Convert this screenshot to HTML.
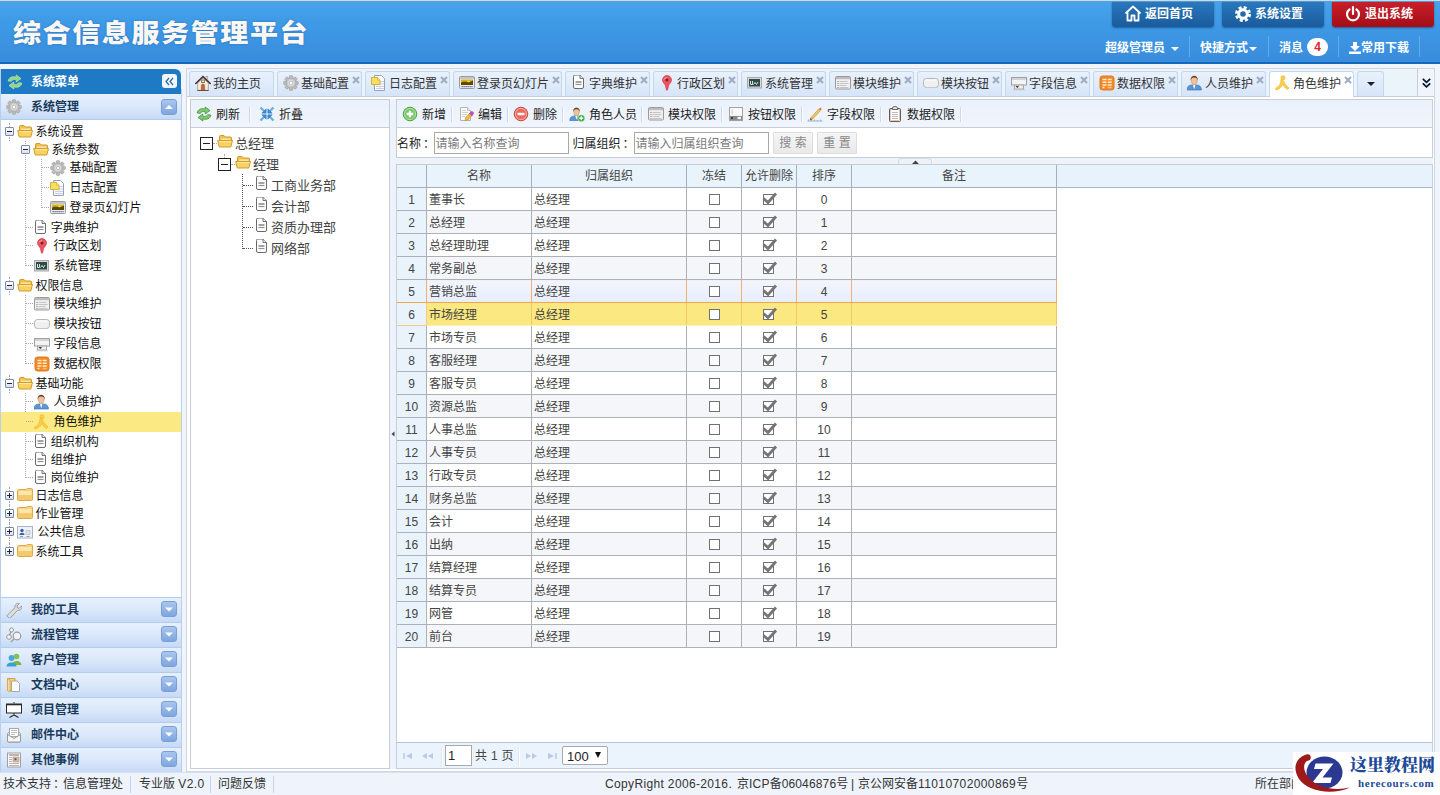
<!DOCTYPE html>
<html lang="zh-CN"><head><meta charset="utf-8"><title>综合信息服务管理平台</title><style>
*{box-sizing:border-box;margin:0;padding:0}
html,body{width:1440px;height:795px;overflow:hidden}
body{position:relative;background:#f0f4fb;font:12px/1 "Liberation Sans","Noto Sans CJK SC",sans-serif;color:#222}
.abs{position:absolute}
svg.ic{display:block}
#top{left:0;top:0;width:1440px;height:64px;background:linear-gradient(180deg,#47a3ea 0%,#3d98e5 45%,#3a8cdc 100%);border-top:1px solid #d8d8d8;border-bottom:2px solid #0f6ac0;overflow:hidden}
#title{left:13px;top:16px;font-size:25.5px;font-weight:900;color:#fbf8f4;letter-spacing:1.42px;line-height:32px;white-space:nowrap;text-shadow:0 0 2px rgba(30,90,170,.7);transform:scale(1.1,1);transform-origin:0 0}
.hbtn{top:1px;height:25px;width:102px;border-radius:0 0 3px 3px;background:linear-gradient(180deg,#2a78bd,#1a5b9d);color:#fff;font-size:12px;font-weight:bold;line-height:24px;white-space:nowrap;box-shadow:0 1px 2px rgba(0,40,90,.5)}
.hbtn.red{background:linear-gradient(180deg,#c8202a,#a50d17)}
.hbtn span{position:absolute;left:33px;top:0}
.hbtn svg{position:absolute;left:12px;top:3px}
.hlink{top:39px;height:16px;line-height:16px;color:#fff;font-size:12px;white-space:nowrap;font-weight:bold}
.hsep{top:35px;width:1px;height:21px;background:#62acea}
.caret{display:inline-block;width:0;height:0;border:4px solid transparent;border-top-color:#fff;border-bottom:0;vertical-align:middle;margin-left:3px}
#west{left:0;top:69px;width:182px;height:703px}
#wbg{left:0;top:20px;width:182px;height:683px;background:#fff;box-shadow:inset 1px 0 0 #b8cfee, inset -1px 0 0 #b8cfee}
#whead{left:0;top:0;width:181px;height:25px;background:#1e7ac4;border-radius:0 5px 0 0;color:#fff;font-weight:bold;line-height:25px}
.acc{left:1px;width:180px;height:25px;background:linear-gradient(180deg,#e6f0fd 0%,#dbe8fa 50%,#c6daf6 100%);border-top:1px solid #b3cbee;color:#1a3a5c;font-weight:bold}
.acc.first{height:26px;border-top:0;border-bottom:1px solid #b3cbee}
.acc.first .t{top:6px}.acc.first svg.ic{top:5px}.acc.first .tool{top:5px}
.acc .t{position:absolute;left:30px;top:5px;line-height:14px;white-space:nowrap}
.acc svg.ic{position:absolute;left:5px;top:4px}
.acc .tool{position:absolute;left:160px;top:3px;width:16px;height:16px;border-radius:3px;background:linear-gradient(180deg,#a9c6ee,#7ea6df);border:1px solid #7a9fd6}
.tn{height:16px;line-height:16px;white-space:nowrap;color:#111}
.tn svg.ic{position:absolute;left:0;top:0}
.tn .lbl{position:absolute;top:0;left:19px}
.sw{width:9px;height:9px;border:1px solid #7a8aa8;background:linear-gradient(180deg,#fff,#d8e0ee);border-radius:1px}
.sw:before{content:"";position:absolute;left:1px;top:3px;width:5px;height:1px;background:#223}
.sw.plus:after{content:"";position:absolute;left:3px;top:1px;width:1px;height:5px;background:#223}
.dotv{width:0;border-left:1px dotted #a8a8a8}
.doth{height:0;border-top:1px dotted #a8a8a8}
.tab{top:71px;height:25px;border:1px solid #c3d7f0;border-bottom:0;border-radius:3px 3px 0 0;background:linear-gradient(180deg,#e9f1fc 0%,#e0ebfa 50%,#d6e5f9 100%);white-space:nowrap;color:#333}
.tab.sel{background:#fff;height:26px}
.tab svg.ic{position:absolute;left:5px;top:3px}
.tab .tt{position:absolute;left:23px;top:5px;line-height:14px}
.tab .x{position:absolute;right:1px;top:4px;width:8px;height:8px}
.panel{background:#fff;border:1px solid #c4d8f2}
.tbar{background:linear-gradient(180deg,#e9f1fb,#f1f5fc);border-bottom:1px solid #c6ccd8}
.tb{top:6px;height:16px;line-height:16px;white-space:nowrap;color:#222}
.tb svg.ic{position:absolute;left:0;top:0}
.tb span{position:absolute;left:20px;top:1px}
.tsep{top:7px;width:1px;height:15px;background:#d2d9e4;border-right:1px solid #fbfcfe;box-sizing:content-box}
.inp{height:22px;border:1px solid #a9a9a9;background:#fff;color:#7a7a7a;line-height:22px;padding-left:0;text-indent:0.5px;white-space:nowrap;overflow:hidden}
.btn{height:22px;border:1px solid #dcdcdc;background:linear-gradient(180deg,#f6f6f6,#e9e9e9);color:#888;text-align:center;line-height:21px;border-radius:1px}
table.grid{border-collapse:collapse;table-layout:fixed;position:absolute;left:0;top:0}
table.grid td,table.grid th{border:1px solid #adb0b6;height:23px;padding:0;font-weight:normal;color:#444;white-space:nowrap;overflow:hidden;line-height:14px;vertical-align:middle}
table.grid th{background:#e9f3fc;text-align:center;border-color:#a4b0c0}
table.grid td{padding-top:2px}
table.grid td.n{background:#e9f3fc;text-align:center}
table.grid td.l{text-align:left;padding-left:2px}
table.grid td.c{text-align:center}
table.grid tr.alt td{background:#f4f6f9}
table.grid tr.alt td.n{background:#e9f3fc}
table.grid tr.sel td{background:#fbe880;border-bottom-color:#fdf0b8;border-right-color:#f3c766}
table.grid tr.sel td.n{background:#e9f3fc;border-bottom-color:#f5c890;border-right-color:#f5c890}
table.grid tr.hov td{background:linear-gradient(180deg,#f3f5fd,#e7edfb);border-right-color:#f2b070;border-bottom-color:#f5a54c}
table.grid tr.hov td.n{background:#e9f3fc}
.cb{display:inline-block;width:11px;height:11px;border:1px solid #727272;background:#fff;vertical-align:middle;position:relative;top:-1px}
#foot{left:0;top:772px;width:1440px;height:23px;background:#eef3fc;border-top:1px solid #d6e2f4;color:#333;line-height:22px;white-space:nowrap}
</style></head><body>
<div id="top" class="abs">
<div id="title" class="abs">综合信息服务管理平台</div>
<div class="abs hbtn" style="left:1112px"><svg width="18" height="17" viewBox="0 0 18 17"><path d="M1.500 8.500l7.500-7 7.500 7M3.500 7.500v8h4v-5h3v5h4v-8" fill="none" stroke="#fff" stroke-width="1.800" stroke-linejoin="round"/></svg><span>返回首页</span></div>
<div class="abs hbtn" style="left:1222px"><svg width="18" height="18" viewBox="0 0 18 18"><circle cx="9" cy="9" r="6" fill="none" stroke="#fff" stroke-width="4" stroke-dasharray="2.700 2"/><circle cx="9" cy="9" r="4.300" fill="none" stroke="#fff" stroke-width="3"/></svg><span>系统设置</span></div>
<div class="abs hbtn red" style="left:1332px"><svg width="18" height="18" viewBox="0 0 18 18"><path d="M5.500 4.500a6 6 0 1 0 7 0" fill="none" stroke="#fff" stroke-width="2.200" stroke-linecap="round"/><path d="M9 2v7" stroke="#fff" stroke-width="2.200" stroke-linecap="round"/></svg><span>退出系统</span></div>
<div class="abs hlink" style="left:1105px">超级管理员 <i class="caret"></i></div>
<div class="abs hsep" style="left:1189px"></div>
<div class="abs hlink" style="left:1200px">快捷方式<i class="caret" style="margin-left:1px"></i></div>
<div class="abs hsep" style="left:1268px"></div>
<div class="abs hlink" style="left:1279px">消息</div>
<div class="abs " style="left:1307px;top:37px;width:21px;height:18px;border-radius:9px;background:#fff;color:#e0202c;font-weight:bold;font-size:12px;line-height:18px;text-align:center">4</div>
<div class="abs hsep" style="left:1338px"></div>
<div class="abs " style="left:1349px;top:41px"><svg width="12" height="12" viewBox="0 0 12 12"><path d="M4 0h4v4h3l-5 5-5-5h3z" fill="#fff"/><rect x="0" y="9.500" width="12" height="2.500" fill="#fff"/></svg></div>
<div class="abs hlink" style="left:1361px">常用下载</div>
<div class="abs hsep" style="left:1419px"></div>
</div>
<div id="west" class="abs"><div id="wbg" class="abs"></div><div class="abs" style="left:0;top:0;width:1px;height:25px;background:#b8cfee"></div>
<div class="abs " style="left:1px;top:0;width:180px;height:25px;background:#1e7ac4;border-radius:0 6px 0 0;color:#fff;font-weight:bold"><div class="abs" style="left:6px;top:5px"><svg class="ic" width="16" height="16" viewBox="0 0 16 16"><path d="M1.200 7c.3-3.500 4.300-5.300 8-3.800v-2.200l4.800 3.500-4.800 3.500v-2.200c-2-.8-4.200-.3-4.800 1.500z" fill="#8fd67c" stroke="#cdeec4" stroke-width="0.600" stroke-linejoin="round"/><path d="M14.800 9c-.3 3.500-4.300 5.300-8 3.800v2.200l-4.800-3.500 4.800-3.500v2.200c2 .8 4.200.3 4.800-1.500z" fill="#8fd67c" stroke="#cdeec4" stroke-width="0.600" stroke-linejoin="round"/></svg></div><div class="abs" style="left:30px;top:6px;line-height:14px;white-space:nowrap">系统菜单</div><div class="abs" style="left:161px;top:5px;width:15px;height:14px;border-radius:3px;background:#f2f6fb"><svg width="15" height="15" viewBox="0 0 15 15"><path d="M7 4l-3 3.500 3 3.500M11 4l-3 3.500 3 3.500" fill="none" stroke="#2a6cb0" stroke-width="1.300"/></svg></div></div>
<div class="abs acc first" style="top:25px"><svg class="ic" width="16" height="16" viewBox="0 0 16 16"><rect x="6.300" y="0.600" width="3.400" height="14.800" rx="1" transform="rotate(0 8 8)" fill="#bdbdbd" stroke="#9c9c9c" stroke-width="0.600"/><rect x="6.300" y="0.600" width="3.400" height="14.800" rx="1" transform="rotate(45 8 8)" fill="#bdbdbd" stroke="#9c9c9c" stroke-width="0.600"/><rect x="6.300" y="0.600" width="3.400" height="14.800" rx="1" transform="rotate(90 8 8)" fill="#bdbdbd" stroke="#9c9c9c" stroke-width="0.600"/><rect x="6.300" y="0.600" width="3.400" height="14.800" rx="1" transform="rotate(135 8 8)" fill="#bdbdbd" stroke="#9c9c9c" stroke-width="0.600"/><circle cx="8" cy="8" r="5" fill="#c8c8c8" stroke="#a4a4a4" stroke-width="0.700"/><circle cx="8" cy="8" r="3" fill="#dcdcdc"/><circle cx="8" cy="8" r="1.700" fill="#fff" stroke="#a8a8a8" stroke-width="0.600"/></svg><div class="t">系统管理</div><div class="tool"><svg width="14" height="14" viewBox="0 0 14 14"><path d="M3 9h8l-4-4z" fill="#fff"/></svg></div></div>
<div class="abs dotv" style="left:9px;top:54px;height:4px"></div>
<div class="abs dotv" style="left:9px;top:68px;height:4px"></div>
<div class="abs dotv" style="left:9px;top:208px;height:4px"></div>
<div class="abs dotv" style="left:9px;top:222px;height:4px"></div>
<div class="abs dotv" style="left:9px;top:306px;height:4px"></div>
<div class="abs dotv" style="left:9px;top:320px;height:4px"></div>
<div class="abs dotv" style="left:9px;top:418px;height:4px"></div>
<div class="abs dotv" style="left:9px;top:432px;height:4px"></div>
<div class="abs dotv" style="left:9px;top:436px;height:4px"></div>
<div class="abs dotv" style="left:9px;top:450px;height:4px"></div>
<div class="abs dotv" style="left:9px;top:454px;height:4px"></div>
<div class="abs dotv" style="left:9px;top:468px;height:6px"></div>
<div class="abs dotv" style="left:9px;top:474px;height:4px"></div>
<div class="abs dotv" style="left:25px;top:72px;height:125px"></div>
<div class="abs dotv" style="left:25px;top:226px;height:69px"></div>
<div class="abs dotv" style="left:25px;top:324px;height:85px"></div>
<div class="abs dotv" style="left:41px;top:90px;height:49px"></div>
<div class="abs sw" style="left:5px;top:58px"></div>
<div class="abs tn" style="left:17px;top:55px"><svg class="ic" width="16" height="16" viewBox="0 0 16 16"><g transform="translate(0,-1)"><path d="M2.500 13.500V3.500q0-1 1-1h3.500l1.500 1.500h5q1 0 1 1v3" fill="#f3c04a" stroke="#cf9a2e"/><path d="M4 5.500h9.500v2h-9.500z" fill="#fbe6a0"/><path d="M0.700 7.500h14.800l-1.700 6.500h-11.600z" fill="#f9d264" stroke="#d09c30"/><path d="M2 8.500h12.300" stroke="#fde9a6" stroke-width="1"/></g></svg><div class="lbl" style="left:18.5px">系统设置</div></div>
<div class="abs sw" style="left:21px;top:76px"></div>
<div class="abs tn" style="left:33px;top:73px"><svg class="ic" width="16" height="16" viewBox="0 0 16 16"><g transform="translate(0,-1)"><path d="M2.500 13.500V3.500q0-1 1-1h3.500l1.500 1.500h5q1 0 1 1v3" fill="#f3c04a" stroke="#cf9a2e"/><path d="M4 5.500h9.500v2h-9.500z" fill="#fbe6a0"/><path d="M0.700 7.500h14.800l-1.700 6.500h-11.600z" fill="#f9d264" stroke="#d09c30"/><path d="M2 8.500h12.300" stroke="#fde9a6" stroke-width="1"/></g></svg><div class="lbl" style="left:18.5px">系统参数</div></div>
<div class="abs doth" style="left:42px;top:98px;width:7px"></div>
<div class="abs tn" style="left:50px;top:91px"><svg class="ic" width="16" height="16" viewBox="0 0 16 16"><rect x="6.300" y="0.600" width="3.400" height="14.800" rx="1" transform="rotate(0 8 8)" fill="#bdbdbd" stroke="#9c9c9c" stroke-width="0.600"/><rect x="6.300" y="0.600" width="3.400" height="14.800" rx="1" transform="rotate(45 8 8)" fill="#bdbdbd" stroke="#9c9c9c" stroke-width="0.600"/><rect x="6.300" y="0.600" width="3.400" height="14.800" rx="1" transform="rotate(90 8 8)" fill="#bdbdbd" stroke="#9c9c9c" stroke-width="0.600"/><rect x="6.300" y="0.600" width="3.400" height="14.800" rx="1" transform="rotate(135 8 8)" fill="#bdbdbd" stroke="#9c9c9c" stroke-width="0.600"/><circle cx="8" cy="8" r="5" fill="#c8c8c8" stroke="#a4a4a4" stroke-width="0.700"/><circle cx="8" cy="8" r="3" fill="#dcdcdc"/><circle cx="8" cy="8" r="1.700" fill="#fff" stroke="#a8a8a8" stroke-width="0.600"/></svg><div class="lbl" style="left:19.5px">基础配置</div></div>
<div class="abs doth" style="left:42px;top:118px;width:7px"></div>
<div class="abs tn" style="left:50px;top:111px"><svg class="ic" width="16" height="16" viewBox="0 0 16 16"><path d="M3.500 0.500h7l3 3v12h-10z" fill="#fdfdff" stroke="#98a2bc"/><path d="M5 6.500h8M5 9h8M5 11.500h8M5 13.500h8" stroke="#c4c8e8" stroke-width="0.900"/><path d="M9 6v9" stroke="#d0d4ee" stroke-width="0.800"/><path d="M0.500 2.500h6l2.500 2.500v4.500h-8.500z" fill="#f7df62" stroke="#d2b43c"/><path d="M6.500 2.500v2.500h2.500" fill="#fdf2a8" stroke="#d2b43c" stroke-width="0.800"/></svg><div class="lbl" style="left:19.5px">日志配置</div></div>
<div class="abs doth" style="left:42px;top:138px;width:7px"></div>
<div class="abs tn" style="left:50px;top:131px"><svg class="ic" width="16" height="16" viewBox="0 0 16 16"><rect x="0.500" y="1.500" width="15" height="12" rx="1" fill="#ececec" stroke="#9a9a9a"/><rect x="1" y="2" width="14" height="2" fill="#c4c4cc"/><rect x="2" y="4.500" width="12" height="5.500" fill="#d8b010"/><path d="M2 8c3-3 6 1 12-2.500v4.500h-12z" fill="#5a4a08"/><path d="M8 5.500l4 .5-3 1.500z" fill="#f8e050"/><path d="M2.500 11.700h11" stroke="#4a5a9a" stroke-width="1.200" stroke-dasharray="1.200 0.800"/></svg><div class="lbl" style="left:19.5px">登录页幻灯片</div></div>
<div class="abs doth" style="left:26px;top:158px;width:7px"></div>
<div class="abs tn" style="left:32.8px;top:151px"><svg class="ic" width="16" height="16" viewBox="0 0 16 16"><g transform="translate(0,-1)"><path d="M2.500 2.500q0-1.500 1.500-1.500h5l3.500 3.500v8.500q0 1.500-1.500 1.500h-7q-1.500 0-1.500-1.500z" fill="#fff" stroke="#6a6a6a"/><path d="M9 1v3.500h3.500" fill="#e8e8e8" stroke="#6a6a6a" stroke-width="0.900"/><path d="M4.500 8h6" stroke="#666" stroke-width="1.200"/><path d="M4.500 10.500h6" stroke="#9a8e92" stroke-width="1.200"/></g></svg><div class="lbl" style="left:18px">字典维护</div></div>
<div class="abs doth" style="left:26px;top:176px;width:7px"></div>
<div class="abs tn" style="left:34px;top:169px"><svg class="ic" width="16" height="16" viewBox="0 0 16 16"><path d="M8 15.500c-.8 0-1-3-1.600-5c-.7-2-2.900-3-2.900-5.500a4.500 4.500 0 0 1 9 0c0 2.500-2.200 3.500-2.900 5.500c-.6 2-.8 5-1.600 5z" fill="#ea5560" stroke="#d03a48" stroke-width="0.700"/><path d="M5.200 4.500a3 3 0 0 1 2.800-2" stroke="#f8a0a8" stroke-width="1" fill="none"/><circle cx="8" cy="5" r="1.500" fill="#8a1c20"/></svg><div class="lbl" style="left:19.5px">行政区划</div></div>
<div class="abs doth" style="left:26px;top:196px;width:7px"></div>
<div class="abs tn" style="left:34px;top:189px"><svg class="ic" width="16" height="16" viewBox="0 0 16 16"><rect x="0.500" y="2.500" width="14" height="10.500" fill="#d8d8d8" stroke="#a8a8a8"/><rect x="2" y="4" width="11" height="7.500" fill="#2e4c48"/><path d="M3.500 6v3.500h2v-3.500M6.500 9.500l1.500-2 1.500 2 1.500-2.500" stroke="#e8f4f0" stroke-width="0.900" fill="none"/></svg><div class="lbl" style="left:19.5px">系统管理</div></div>
<div class="abs sw" style="left:5px;top:212px"></div>
<div class="abs tn" style="left:17px;top:209px"><svg class="ic" width="16" height="16" viewBox="0 0 16 16"><g transform="translate(0,-1)"><path d="M2.500 13.500V3.500q0-1 1-1h3.500l1.500 1.500h5q1 0 1 1v3" fill="#f3c04a" stroke="#cf9a2e"/><path d="M4 5.500h9.500v2h-9.500z" fill="#fbe6a0"/><path d="M0.700 7.500h14.800l-1.700 6.500h-11.600z" fill="#f9d264" stroke="#d09c30"/><path d="M2 8.500h12.300" stroke="#fde9a6" stroke-width="1"/></g></svg><div class="lbl" style="left:18.5px">权限信息</div></div>
<div class="abs doth" style="left:26px;top:234px;width:7px"></div>
<div class="abs tn" style="left:34px;top:227px"><svg class="ic" width="16" height="16" viewBox="0 0 16 16"><rect x="0.500" y="1.500" width="15" height="12.500" rx="1" fill="#f0f0f0" stroke="#9a9a9a"/><rect x="1" y="2" width="14" height="2.200" fill="#bcbcbc"/><path d="M2.500 6.500h1M2.500 8.500h1M2.500 10.500h1M2.500 12.500h1" stroke="#777" stroke-width="1"/><path d="M4.500 6.500h8M4.500 8.500h9M4.500 10.500h7M4.500 12.500h9" stroke="#c4c4c4" stroke-width="1"/></svg><div class="lbl" style="left:19.5px">模块维护</div></div>
<div class="abs doth" style="left:26px;top:254px;width:7px"></div>
<div class="abs tn" style="left:34px;top:247px"><svg class="ic" width="16" height="16" viewBox="0 0 16 16"><rect x="0.500" y="3.500" width="15" height="9" rx="3" fill="#f0f0f0" stroke="#b4b4b4"/><path d="M2.500 12.500h11" stroke="#c8c8c8" stroke-width="1"/><path d="M2.500 5h11" stroke="#fff" stroke-width="1"/></svg><div class="lbl" style="left:19.5px">模块按钮</div></div>
<div class="abs doth" style="left:26px;top:274px;width:7px"></div>
<div class="abs tn" style="left:34px;top:267px"><svg class="ic" width="16" height="16" viewBox="0 0 16 16"><rect x="0.500" y="2.500" width="15" height="7.500" fill="#f4f4f4" stroke="#a0a0a0"/><rect x="1" y="3" width="14" height="2" fill="#d4d4d4"/><rect x="3.500" y="10" width="9" height="4" fill="#efefef" stroke="#a8a8a8"/><path d="M4.500 11l1.800 2 1.800-2z" fill="#333"/><path d="M2 14.800h12" stroke="#c4c4c4" stroke-width="0.800"/></svg><div class="lbl" style="left:19.5px">字段信息</div></div>
<div class="abs doth" style="left:26px;top:294px;width:7px"></div>
<div class="abs tn" style="left:34px;top:287px"><svg class="ic" width="16" height="16" viewBox="0 0 16 16"><rect x="1" y="1" width="14" height="14" rx="2.500" fill="#f0892a" stroke="#e07a1c"/><path d="M3.500 4.500h4M8.700 4.500h4M3.500 7.200h4M8.700 7.200h4M3.500 9.900h4M8.700 9.900h4M3.500 12.500h2" stroke="#fff0c8" stroke-width="1.500"/><path d="M8.700 12.500h4" stroke="#f8c078" stroke-width="1.500"/></svg><div class="lbl" style="left:19.5px">数据权限</div></div>
<div class="abs sw" style="left:5px;top:310px"></div>
<div class="abs tn" style="left:17px;top:307px"><svg class="ic" width="16" height="16" viewBox="0 0 16 16"><g transform="translate(0,-1)"><path d="M2.500 13.500V3.500q0-1 1-1h3.500l1.500 1.500h5q1 0 1 1v3" fill="#f3c04a" stroke="#cf9a2e"/><path d="M4 5.500h9.500v2h-9.500z" fill="#fbe6a0"/><path d="M0.700 7.500h14.800l-1.700 6.500h-11.600z" fill="#f9d264" stroke="#d09c30"/><path d="M2 8.500h12.300" stroke="#fde9a6" stroke-width="1"/></g></svg><div class="lbl" style="left:18.5px">基础功能</div></div>
<div class="abs doth" style="left:26px;top:332px;width:7px"></div>
<div class="abs tn" style="left:34px;top:325px"><svg class="ic" width="16" height="16" viewBox="0 0 16 16"><g transform="translate(-0.800,-1.500)"><path d="M0.800 16.500c0-3.500 2-4.700 4.500-5h5.400c2.500.3 4.500 1.500 4.500 5z" fill="#5b96d4" stroke="#3d78b8" stroke-width="0.700"/><path d="M6.700 11.300l1.300 4.500 1.300-4.500z" fill="#fff"/><path d="M5 6c0-4 6-4 6 0c0 1.500-.5 5.500-3 5.500s-3-4-3-5.500z" fill="#eec29c" stroke="#b88858" stroke-width="0.500"/><path d="M4.500 7c-.8-6.500 7.800-6.500 7 0c-.5-2-1-3-3.500-3s-3 1-3.500 3z" fill="#6a4428"/></g></svg><div class="lbl" style="left:19.5px">人员维护</div></div>
<div class="abs " style="left:1px;top:343px;width:180px;height:20px;background:#fbe983"></div>
<div class="abs doth" style="left:26px;top:352px;width:7px"></div>
<div class="abs tn" style="left:34px;top:345px"><svg class="ic" width="16" height="16" viewBox="0 0 16 16"><circle cx="8" cy="2.800" r="2.100" fill="#f8cf4a" stroke="#ecb21e" stroke-width="0.600"/><path d="M7.500 4.500c1.800 2.500 2 4.500 6.500 8.500l-1.500 1.500c-2.800-1.800-4-3.500-4.700-5.500c-.8 2.500-2.800 5-6.800 6l-.7-1.500c3.500-1.500 5.700-4.500 5.700-9z" fill="#f8cf4a" stroke="#ecb21e" stroke-width="0.600"/></svg><div class="lbl" style="left:19.5px">角色维护</div></div>
<div class="abs doth" style="left:26px;top:372px;width:7px"></div>
<div class="abs tn" style="left:32.8px;top:365px"><svg class="ic" width="16" height="16" viewBox="0 0 16 16"><g transform="translate(0,-1)"><path d="M2.500 2.500q0-1.500 1.500-1.500h5l3.500 3.500v8.500q0 1.500-1.500 1.500h-7q-1.500 0-1.500-1.500z" fill="#fff" stroke="#6a6a6a"/><path d="M9 1v3.500h3.500" fill="#e8e8e8" stroke="#6a6a6a" stroke-width="0.900"/><path d="M4.500 8h6" stroke="#666" stroke-width="1.200"/><path d="M4.500 10.500h6" stroke="#9a8e92" stroke-width="1.200"/></g></svg><div class="lbl" style="left:18px">组织机构</div></div>
<div class="abs doth" style="left:26px;top:390px;width:7px"></div>
<div class="abs tn" style="left:32.8px;top:383px"><svg class="ic" width="16" height="16" viewBox="0 0 16 16"><g transform="translate(0,-1)"><path d="M2.500 2.500q0-1.500 1.500-1.500h5l3.500 3.500v8.500q0 1.500-1.500 1.500h-7q-1.500 0-1.500-1.500z" fill="#fff" stroke="#6a6a6a"/><path d="M9 1v3.500h3.500" fill="#e8e8e8" stroke="#6a6a6a" stroke-width="0.900"/><path d="M4.500 8h6" stroke="#666" stroke-width="1.200"/><path d="M4.500 10.500h6" stroke="#9a8e92" stroke-width="1.200"/></g></svg><div class="lbl" style="left:18px">组维护</div></div>
<div class="abs doth" style="left:26px;top:408px;width:7px"></div>
<div class="abs tn" style="left:32.8px;top:401px"><svg class="ic" width="16" height="16" viewBox="0 0 16 16"><g transform="translate(0,-1)"><path d="M2.500 2.500q0-1.500 1.500-1.500h5l3.500 3.500v8.500q0 1.500-1.500 1.500h-7q-1.500 0-1.500-1.500z" fill="#fff" stroke="#6a6a6a"/><path d="M9 1v3.500h3.500" fill="#e8e8e8" stroke="#6a6a6a" stroke-width="0.900"/><path d="M4.500 8h6" stroke="#666" stroke-width="1.200"/><path d="M4.500 10.500h6" stroke="#9a8e92" stroke-width="1.200"/></g></svg><div class="lbl" style="left:18px">岗位维护</div></div>
<div class="abs sw plus" style="left:5px;top:422px"></div>
<div class="abs tn" style="left:17px;top:419px"><svg class="ic" width="16" height="16" viewBox="0 0 16 16"><path d="M0.500 2.500q0-1 1-1h7.500l1.500-1h4q1 0 1 1v10q0 1-1 1h-13q-1 0-1-1z" fill="#f6d27a" stroke="#dcaa48"/><path d="M1.500 3h13v4h-13z" fill="#fbe7ae"/><path d="M1.500 7h13v5h-13z" fill="#f3c96c"/></svg><div class="lbl" style="left:18.5px">日志信息</div></div>
<div class="abs sw plus" style="left:5px;top:440px"></div>
<div class="abs tn" style="left:17px;top:437px"><svg class="ic" width="16" height="16" viewBox="0 0 16 16"><path d="M0.500 2.500q0-1 1-1h7.500l1.500-1h4q1 0 1 1v10q0 1-1 1h-13q-1 0-1-1z" fill="#f6d27a" stroke="#dcaa48"/><path d="M1.500 3h13v4h-13z" fill="#fbe7ae"/><path d="M1.500 7h13v5h-13z" fill="#f3c96c"/></svg><div class="lbl" style="left:18.5px">作业管理</div></div>
<div class="abs sw plus" style="left:5px;top:458px"></div>
<div class="abs tn" style="left:17px;top:455px"><svg class="ic" width="16" height="16" viewBox="0 0 16 16"><rect x="0.500" y="2.500" width="15" height="11.500" fill="#eef2f8" stroke="#a9b4c4"/><circle cx="5" cy="6.500" r="1.700" fill="#3c5f9a"/><path d="M2.500 11c0-3 5-3 5 0z" fill="#3c5f9a"/><path d="M9 6.500h4v4h-4z" fill="#dfe6ee" stroke="#a9b4c4" stroke-width="0.600"/><path d="M3 12.500h3M9.500 12.500h3" stroke="#8ea0b8"/></svg><div class="lbl" style="left:20.5px">公共信息</div></div>
<div class="abs sw plus" style="left:5px;top:478px"></div>
<div class="abs tn" style="left:17px;top:475px"><svg class="ic" width="16" height="16" viewBox="0 0 16 16"><path d="M0.500 2.500q0-1 1-1h7.500l1.500-1h4q1 0 1 1v10q0 1-1 1h-13q-1 0-1-1z" fill="#f6d27a" stroke="#dcaa48"/><path d="M1.500 3h13v4h-13z" fill="#fbe7ae"/><path d="M1.500 7h13v5h-13z" fill="#f3c96c"/></svg><div class="lbl" style="left:18.5px">系统工具</div></div>
<div class="abs acc" style="top:528px"><svg class="ic" width="16" height="16" viewBox="0 0 16 16"><path d="M1.500 14.500q-.8-.8 0-1.600l7.500-7.200c-.8-2.700 1.800-5 4.500-4.200l-2.500 2.500.5 1.800 1.800.5 2.500-2.500c.8 2.700-1.500 5.300-4.200 4.500l-7.200 7.500q-.8.800-1.600 0z" fill="#dcdcdc" stroke="#8c8c8c" stroke-width="0.800"/></svg><div class="t">我的工具</div><div class="tool"><svg width="14" height="14" viewBox="0 0 14 14"><path d="M3 5.500h8l-4 4z" fill="#fff"/></svg></div></div>
<div class="abs acc" style="top:553px"><svg class="ic" width="16" height="16" viewBox="0 0 16 16"><circle cx="5.500" cy="3" r="2" fill="#f6f6f6" stroke="#9a9a9a"/><circle cx="3" cy="10" r="2.300" fill="#f6f6f6" stroke="#9a9a9a"/><circle cx="11" cy="9" r="3.800" fill="#f2f2f2" stroke="#9a9a9a" stroke-width="1.200"/><path d="M5 5l-1.500 3M8 12l-3 3" stroke="#9a9a9a" stroke-width="1.300"/></svg><div class="t">流程管理</div><div class="tool"><svg width="14" height="14" viewBox="0 0 14 14"><path d="M3 5.500h8l-4 4z" fill="#fff"/></svg></div></div>
<div class="abs acc" style="top:578px"><svg class="ic" width="16" height="16" viewBox="0 0 16 16"><circle cx="10.500" cy="4.500" r="2.800" fill="#86c04a"/><path d="M6 13c0-5.500 9.500-5.500 9.500 0z" fill="#7ab83e"/><circle cx="5.500" cy="6" r="2.900" fill="#48a8d8"/><path d="M0.500 14.500c0-5.500 10-5.500 10 0z" fill="#36a0d0"/></svg><div class="t">客户管理</div><div class="tool"><svg width="14" height="14" viewBox="0 0 14 14"><path d="M3 5.500h8l-4 4z" fill="#fff"/></svg></div></div>
<div class="abs acc" style="top:603px"><svg class="ic" width="16" height="16" viewBox="0 0 16 16"><path d="M1.500 1.500h7.500v12h-7.500z" fill="#f4cf80" stroke="#d4a040"/><path d="M1.500 1.500l2.500 1.500v12l-2.500-1.500z" fill="#f8dc98" stroke="#d4a040" stroke-width="0.700"/><path d="M5.500 4h5.500l2.500 2.500v8h-8z" fill="#fdfdfd" stroke="#a8a8a8"/></svg><div class="t">文档中心</div><div class="tool"><svg width="14" height="14" viewBox="0 0 14 14"><path d="M3 5.500h8l-4 4z" fill="#fff"/></svg></div></div>
<div class="abs acc" style="top:628px"><svg class="ic" width="16" height="16" viewBox="0 0 16 16"><rect x="0.500" y="2.500" width="15" height="8.500" fill="#fdfdfd" stroke="#2a2a2a"/><rect x="0" y="1.500" width="16" height="1.800" fill="#2a2a2a"/><path d="M8 11v2.500M3.500 15.500l4.500-2.500 4.500 2.500" stroke="#2a2a2a" fill="none" stroke-width="1.100"/><path d="M8 0v1.500" stroke="#2a2a2a"/></svg><div class="t">项目管理</div><div class="tool"><svg width="14" height="14" viewBox="0 0 14 14"><path d="M3 5.500h8l-4 4z" fill="#fff"/></svg></div></div>
<div class="abs acc" style="top:653px"><svg class="ic" width="16" height="16" viewBox="0 0 16 16"><path d="M1.500 6.500l2-1.500h9l2 1.500v7.500q0 1-1 1h-11q-1 0-1-1z" fill="#f2f2f2" stroke="#9a9a9a"/><rect x="3.500" y="1.500" width="9" height="8" fill="#fff" stroke="#a8a8a8"/><path d="M5 3.500h6M5 5.500h6M5 7.500h4" stroke="#b8b8b8" stroke-width="0.900"/><path d="M1.500 7.500l6.500 4 6.500-4v6.500q0 1-1 1h-11q-1 0-1-1z" fill="#f6f6f6" stroke="#9a9a9a"/></svg><div class="t">邮件中心</div><div class="tool"><svg width="14" height="14" viewBox="0 0 14 14"><path d="M3 5.500h8l-4 4z" fill="#fff"/></svg></div></div>
<div class="abs acc" style="top:678px"><svg class="ic" width="16" height="16" viewBox="0 0 16 16"><rect x="1.500" y="1" width="13" height="14" fill="#fbfbfb" stroke="#a0a0a0"/><path d="M3 3h10" stroke="#8a8a8a" stroke-width="1.200"/><path d="M3 5.500h3M3 7.500h3M3 9.500h3M3 11.500h10M3 13.500h10" stroke="#b0b0b0" stroke-width="0.900"/><rect x="7" y="5" width="6" height="5" fill="#d8c0a8" stroke="#a89080" stroke-width="0.600"/><rect x="8.500" y="6.300" width="2" height="2" fill="#8a3a3a"/></svg><div class="t">其他事例</div><div class="tool"><svg width="14" height="14" viewBox="0 0 14 14"><path d="M3 5.500h8l-4 4z" fill="#fff"/></svg></div></div>
</div>
<div class="abs " style="left:186px;top:68px;width:1249px;height:704px;background:#fff;border:1px solid #d0d6e0"></div>
<div class="abs " style="left:187px;top:69px;width:1247px;height:28px;background:#ebf3fb;border-bottom:1px solid #c6ccd8"></div>
<div class="abs tab" style="left:189px;width:85px"><svg class="ic" width="16" height="16" viewBox="0 0 16 16"><path d="M2.700 8v7.300h10.600v-7.300l-5.300-5z" fill="#fbeee0" stroke="#a8927c" stroke-width="0.800"/><rect x="11" y="1.500" width="1.800" height="4" fill="#f4f0ec" stroke="#8a7a6c" stroke-width="0.500"/><path d="M0.800 8.500l7.200-7 7.200 7" fill="none" stroke="#3a3230" stroke-width="1.500" stroke-linecap="round"/><rect x="6.700" y="5" width="2.600" height="2.600" fill="#f8f4d8" stroke="#6a5a3a" stroke-width="0.800"/><path d="M6.300 15.300v-4.500q0-1.800 1.700-1.800t1.700 1.800v4.500z" fill="#c06a3c" stroke="#8a4420" stroke-width="0.500"/><path d="M2.300 15.500h11.400" stroke="#5a4a3c" stroke-width="0.900"/></svg><div class="tt">我的主页</div></div>
<div class="abs tab" style="left:277px;width:85px"><svg class="ic" width="16" height="16" viewBox="0 0 16 16"><rect x="6.300" y="0.600" width="3.400" height="14.800" rx="1" transform="rotate(0 8 8)" fill="#bdbdbd" stroke="#9c9c9c" stroke-width="0.600"/><rect x="6.300" y="0.600" width="3.400" height="14.800" rx="1" transform="rotate(45 8 8)" fill="#bdbdbd" stroke="#9c9c9c" stroke-width="0.600"/><rect x="6.300" y="0.600" width="3.400" height="14.800" rx="1" transform="rotate(90 8 8)" fill="#bdbdbd" stroke="#9c9c9c" stroke-width="0.600"/><rect x="6.300" y="0.600" width="3.400" height="14.800" rx="1" transform="rotate(135 8 8)" fill="#bdbdbd" stroke="#9c9c9c" stroke-width="0.600"/><circle cx="8" cy="8" r="5" fill="#c8c8c8" stroke="#a4a4a4" stroke-width="0.700"/><circle cx="8" cy="8" r="3" fill="#dcdcdc"/><circle cx="8" cy="8" r="1.700" fill="#fff" stroke="#a8a8a8" stroke-width="0.600"/></svg><div class="tt">基础配置</div><svg class="x" viewBox="0 0 8 8"><path d="M1 1l6 6M7 1l-6 6" stroke="#9cacc2" stroke-width="2"/></svg></div>
<div class="abs tab" style="left:365px;width:85px"><svg class="ic" width="16" height="16" viewBox="0 0 16 16"><path d="M3.500 0.500h7l3 3v12h-10z" fill="#fdfdff" stroke="#98a2bc"/><path d="M5 6.500h8M5 9h8M5 11.500h8M5 13.500h8" stroke="#c4c8e8" stroke-width="0.900"/><path d="M9 6v9" stroke="#d0d4ee" stroke-width="0.800"/><path d="M0.500 2.500h6l2.500 2.500v4.500h-8.500z" fill="#f7df62" stroke="#d2b43c"/><path d="M6.500 2.500v2.500h2.500" fill="#fdf2a8" stroke="#d2b43c" stroke-width="0.800"/></svg><div class="tt">日志配置</div><svg class="x" viewBox="0 0 8 8"><path d="M1 1l6 6M7 1l-6 6" stroke="#9cacc2" stroke-width="2"/></svg></div>
<div class="abs tab" style="left:453px;width:109px"><svg class="ic" width="16" height="16" viewBox="0 0 16 16"><rect x="0.500" y="1.500" width="15" height="12" rx="1" fill="#ececec" stroke="#9a9a9a"/><rect x="1" y="2" width="14" height="2" fill="#c4c4cc"/><rect x="2" y="4.500" width="12" height="5.500" fill="#d8b010"/><path d="M2 8c3-3 6 1 12-2.500v4.500h-12z" fill="#5a4a08"/><path d="M8 5.500l4 .5-3 1.500z" fill="#f8e050"/><path d="M2.500 11.700h11" stroke="#4a5a9a" stroke-width="1.200" stroke-dasharray="1.200 0.800"/></svg><div class="tt">登录页幻灯片</div><svg class="x" viewBox="0 0 8 8"><path d="M1 1l6 6M7 1l-6 6" stroke="#9cacc2" stroke-width="2"/></svg></div>
<div class="abs tab" style="left:565px;width:85px"><svg class="ic" width="16" height="16" viewBox="0 0 16 16"><g transform="translate(0,-1)"><path d="M2.500 2.500q0-1.500 1.500-1.500h5l3.500 3.500v8.500q0 1.500-1.500 1.500h-7q-1.500 0-1.500-1.500z" fill="#fff" stroke="#6a6a6a"/><path d="M9 1v3.500h3.500" fill="#e8e8e8" stroke="#6a6a6a" stroke-width="0.900"/><path d="M4.500 8h6" stroke="#666" stroke-width="1.200"/><path d="M4.500 10.500h6" stroke="#9a8e92" stroke-width="1.200"/></g></svg><div class="tt">字典维护</div><svg class="x" viewBox="0 0 8 8"><path d="M1 1l6 6M7 1l-6 6" stroke="#9cacc2" stroke-width="2"/></svg></div>
<div class="abs tab" style="left:653px;width:85px"><svg class="ic" width="16" height="16" viewBox="0 0 16 16"><path d="M8 15.500c-.8 0-1-3-1.600-5c-.7-2-2.900-3-2.900-5.500a4.500 4.500 0 0 1 9 0c0 2.500-2.200 3.500-2.900 5.500c-.6 2-.8 5-1.600 5z" fill="#ea5560" stroke="#d03a48" stroke-width="0.700"/><path d="M5.200 4.500a3 3 0 0 1 2.800-2" stroke="#f8a0a8" stroke-width="1" fill="none"/><circle cx="8" cy="5" r="1.500" fill="#8a1c20"/></svg><div class="tt">行政区划</div><svg class="x" viewBox="0 0 8 8"><path d="M1 1l6 6M7 1l-6 6" stroke="#9cacc2" stroke-width="2"/></svg></div>
<div class="abs tab" style="left:741px;width:85px"><svg class="ic" width="16" height="16" viewBox="0 0 16 16"><rect x="0.500" y="2.500" width="14" height="10.500" fill="#d8d8d8" stroke="#a8a8a8"/><rect x="2" y="4" width="11" height="7.500" fill="#2e4c48"/><path d="M3.500 6v3.500h2v-3.500M6.500 9.500l1.500-2 1.500 2 1.500-2.500" stroke="#e8f4f0" stroke-width="0.900" fill="none"/></svg><div class="tt">系统管理</div><svg class="x" viewBox="0 0 8 8"><path d="M1 1l6 6M7 1l-6 6" stroke="#9cacc2" stroke-width="2"/></svg></div>
<div class="abs tab" style="left:829px;width:85px"><svg class="ic" width="16" height="16" viewBox="0 0 16 16"><rect x="0.500" y="1.500" width="15" height="12.500" rx="1" fill="#f0f0f0" stroke="#9a9a9a"/><rect x="1" y="2" width="14" height="2.200" fill="#bcbcbc"/><path d="M2.500 6.500h1M2.500 8.500h1M2.500 10.500h1M2.500 12.500h1" stroke="#777" stroke-width="1"/><path d="M4.500 6.500h8M4.500 8.500h9M4.500 10.500h7M4.500 12.500h9" stroke="#c4c4c4" stroke-width="1"/></svg><div class="tt">模块维护</div><svg class="x" viewBox="0 0 8 8"><path d="M1 1l6 6M7 1l-6 6" stroke="#9cacc2" stroke-width="2"/></svg></div>
<div class="abs tab" style="left:917px;width:85px"><svg class="ic" width="16" height="16" viewBox="0 0 16 16"><rect x="0.500" y="3.500" width="15" height="9" rx="3" fill="#f0f0f0" stroke="#b4b4b4"/><path d="M2.500 12.500h11" stroke="#c8c8c8" stroke-width="1"/><path d="M2.500 5h11" stroke="#fff" stroke-width="1"/></svg><div class="tt">模块按钮</div><svg class="x" viewBox="0 0 8 8"><path d="M1 1l6 6M7 1l-6 6" stroke="#9cacc2" stroke-width="2"/></svg></div>
<div class="abs tab" style="left:1005px;width:85px"><svg class="ic" width="16" height="16" viewBox="0 0 16 16"><rect x="0.500" y="2.500" width="15" height="7.500" fill="#f4f4f4" stroke="#a0a0a0"/><rect x="1" y="3" width="14" height="2" fill="#d4d4d4"/><rect x="3.500" y="10" width="9" height="4" fill="#efefef" stroke="#a8a8a8"/><path d="M4.500 11l1.800 2 1.800-2z" fill="#333"/><path d="M2 14.800h12" stroke="#c4c4c4" stroke-width="0.800"/></svg><div class="tt">字段信息</div><svg class="x" viewBox="0 0 8 8"><path d="M1 1l6 6M7 1l-6 6" stroke="#9cacc2" stroke-width="2"/></svg></div>
<div class="abs tab" style="left:1093px;width:85px"><svg class="ic" width="16" height="16" viewBox="0 0 16 16"><rect x="1" y="1" width="14" height="14" rx="2.500" fill="#f0892a" stroke="#e07a1c"/><path d="M3.500 4.500h4M8.700 4.500h4M3.500 7.200h4M8.700 7.200h4M3.500 9.900h4M8.700 9.900h4M3.500 12.500h2" stroke="#fff0c8" stroke-width="1.500"/><path d="M8.700 12.500h4" stroke="#f8c078" stroke-width="1.500"/></svg><div class="tt">数据权限</div><svg class="x" viewBox="0 0 8 8"><path d="M1 1l6 6M7 1l-6 6" stroke="#9cacc2" stroke-width="2"/></svg></div>
<div class="abs tab" style="left:1181px;width:85px"><svg class="ic" width="16" height="16" viewBox="0 0 16 16"><g transform="translate(-0.800,-1.500)"><path d="M0.800 16.500c0-3.500 2-4.700 4.500-5h5.400c2.500.3 4.500 1.500 4.500 5z" fill="#5b96d4" stroke="#3d78b8" stroke-width="0.700"/><path d="M6.700 11.300l1.300 4.500 1.300-4.500z" fill="#fff"/><path d="M5 6c0-4 6-4 6 0c0 1.500-.5 5.500-3 5.500s-3-4-3-5.500z" fill="#eec29c" stroke="#b88858" stroke-width="0.500"/><path d="M4.500 7c-.8-6.500 7.800-6.500 7 0c-.5-2-1-3-3.500-3s-3 1-3.500 3z" fill="#6a4428"/></g></svg><div class="tt">人员维护</div><svg class="x" viewBox="0 0 8 8"><path d="M1 1l6 6M7 1l-6 6" stroke="#9cacc2" stroke-width="2"/></svg></div>
<div class="abs tab sel" style="left:1269px;width:85px"><svg class="ic" width="16" height="16" viewBox="0 0 16 16"><circle cx="8" cy="2.800" r="2.100" fill="#f8cf4a" stroke="#ecb21e" stroke-width="0.600"/><path d="M7.500 4.500c1.800 2.500 2 4.500 6.500 8.500l-1.500 1.500c-2.800-1.800-4-3.500-4.700-5.500c-.8 2.500-2.800 5-6.800 6l-.7-1.500c3.500-1.500 5.700-4.500 5.700-9z" fill="#f8cf4a" stroke="#ecb21e" stroke-width="0.600"/></svg><div class="tt">角色维护</div><svg class="x" viewBox="0 0 8 8"><path d="M1 1l6 6M7 1l-6 6" stroke="#9cacc2" stroke-width="2"/></svg></div>
<div class="abs tab" style="left:1357px;width:27px"><svg class="abs" style="left:9px;top:10px" width="8" height="4" viewBox="0 0 8 4"><path d="M0 0h8l-4 4z" fill="#1a2030"/></svg></div>
<div class="abs " style="left:1417px;top:69px;width:17px;height:27px;background:#f0f5fc;border-left:1px solid #c6ccd8"><svg class="abs" style="left:4px;top:9px" width="9" height="10" viewBox="0 0 9 10"><path d="M0.800 0.800l3.700 3.500 3.700-3.500M0.800 5.300l3.700 3.500 3.700-3.500" fill="none" stroke="#0c1830" stroke-width="1.800"/></svg></div>
<div class="abs " style="left:190px;top:99px;width:200px;height:670px;background:#fff;border:1px solid #c6ccd8"></div>
<div class="abs tbar" style="left:191px;top:100px;width:198px;height:28px"><div class="abs tb" style="left:5px"><svg class="ic" width="16" height="16" viewBox="0 0 16 16"><path d="M1.200 7c.3-3.500 4.300-5.300 8-3.800v-2.200l4.800 3.500-4.800 3.500v-2.200c-2-.8-4.200-.3-4.800 1.500z" fill="#7ecb6e" stroke="#3f8f3a" stroke-width="0.800" stroke-linejoin="round"/><path d="M14.800 9c-.3 3.500-4.300 5.300-8 3.800v2.200l-4.800-3.500 4.800-3.500v2.200c2 .8 4.200.3 4.800-1.500z" fill="#7ecb6e" stroke="#3f8f3a" stroke-width="0.800" stroke-linejoin="round"/></svg><span>刷新</span></div><div class="abs tsep" style="left:58px"></div><div class="abs tb" style="left:68px"><svg class="ic" width="16" height="16" viewBox="0 0 16 16"><path d="M1.500 1.500l4 4M14.500 1.500l-4 4M1.500 14.500l4-4M14.500 14.500l-4-4" stroke="#6ab0e4" stroke-width="2.400"/><path d="M2.800 7.200h4.400v-4.400zM13.200 7.200h-4.400v-4.400zM2.800 8.800h4.400v4.400zM13.200 8.800h-4.400v4.400z" fill="#3a8cd2" stroke="#2e78bc" stroke-width="0.500"/></svg><span>折叠</span></div></div>
<div class="abs doth" style="left:213px;top:143px;width:4px"></div>
<div class="abs " style="left:200px;top:137px;width:13px;height:13px;border:1px solid #222;background:#fff"><div class="abs" style="left:2px;top:5px;width:7px;height:1px;background:#222"></div></div>
<div class="abs tn" style="left:217px;top:134px;font-size:13px"><svg class="ic" width="16" height="16" viewBox="0 0 16 16"><g transform="translate(0,-1)"><path d="M2.500 13.500V3.500q0-1 1-1h3.500l1.500 1.500h5q1 0 1 1v3" fill="#f3c04a" stroke="#cf9a2e"/><path d="M4 5.500h9.500v2h-9.500z" fill="#fbe6a0"/><path d="M0.700 7.500h14.800l-1.700 6.500h-11.600z" fill="#f9d264" stroke="#d09c30"/><path d="M2 8.500h12.300" stroke="#fde9a6" stroke-width="1"/></g></svg><div class="lbl" style="left:18px;top:2px;color:#444">总经理</div></div>
<div class="abs dotv" style="left:224px;top:154px;height:4px"></div>
<div class="abs doth" style="left:231px;top:164px;width:4px"></div>
<div class="abs " style="left:218px;top:158px;width:13px;height:13px;border:1px solid #222;background:#fff"><div class="abs" style="left:2px;top:5px;width:7px;height:1px;background:#222"></div></div>
<div class="abs tn" style="left:235px;top:155px;font-size:13px"><svg class="ic" width="16" height="16" viewBox="0 0 16 16"><g transform="translate(0,-1)"><path d="M2.500 13.500V3.500q0-1 1-1h3.500l1.500 1.500h5q1 0 1 1v3" fill="#f3c04a" stroke="#cf9a2e"/><path d="M4 5.500h9.500v2h-9.500z" fill="#fbe6a0"/><path d="M0.700 7.500h14.800l-1.700 6.500h-11.600z" fill="#f9d264" stroke="#d09c30"/><path d="M2 8.500h12.300" stroke="#fde9a6" stroke-width="1"/></g></svg><div class="lbl" style="left:18px;top:2px;color:#444">经理</div></div>
<div class="abs tn" style="left:253.500px;top:176px;font-size:13px"><svg class="ic" width="16" height="16" viewBox="0 0 16 16"><g transform="translate(0,-1)"><path d="M2.500 2.500q0-1.500 1.500-1.500h5l3.500 3.500v8.500q0 1.500-1.500 1.500h-7q-1.500 0-1.500-1.500z" fill="#fff" stroke="#6a6a6a"/><path d="M9 1v3.500h3.500" fill="#e8e8e8" stroke="#6a6a6a" stroke-width="0.900"/><path d="M4.500 8h6" stroke="#666" stroke-width="1.200"/><path d="M4.500 10.500h6" stroke="#9a8e92" stroke-width="1.200"/></g></svg><div class="lbl" style="left:17.500px;top:2px;color:#444">工商业务部</div></div>
<div class="abs doth" style="left:243px;top:185px;width:10px;border-color:#555"></div>
<div class="abs tn" style="left:253.500px;top:197px;font-size:13px"><svg class="ic" width="16" height="16" viewBox="0 0 16 16"><g transform="translate(0,-1)"><path d="M2.500 2.500q0-1.500 1.500-1.500h5l3.500 3.500v8.500q0 1.500-1.500 1.500h-7q-1.500 0-1.500-1.500z" fill="#fff" stroke="#6a6a6a"/><path d="M9 1v3.500h3.500" fill="#e8e8e8" stroke="#6a6a6a" stroke-width="0.900"/><path d="M4.500 8h6" stroke="#666" stroke-width="1.200"/><path d="M4.500 10.500h6" stroke="#9a8e92" stroke-width="1.200"/></g></svg><div class="lbl" style="left:17.500px;top:2px;color:#444">会计部</div></div>
<div class="abs doth" style="left:243px;top:206px;width:10px;border-color:#555"></div>
<div class="abs tn" style="left:253.500px;top:218px;font-size:13px"><svg class="ic" width="16" height="16" viewBox="0 0 16 16"><g transform="translate(0,-1)"><path d="M2.500 2.500q0-1.500 1.500-1.500h5l3.500 3.500v8.500q0 1.500-1.500 1.500h-7q-1.500 0-1.500-1.500z" fill="#fff" stroke="#6a6a6a"/><path d="M9 1v3.500h3.500" fill="#e8e8e8" stroke="#6a6a6a" stroke-width="0.900"/><path d="M4.500 8h6" stroke="#666" stroke-width="1.200"/><path d="M4.500 10.500h6" stroke="#9a8e92" stroke-width="1.200"/></g></svg><div class="lbl" style="left:17.500px;top:2px;color:#444">资质办理部</div></div>
<div class="abs doth" style="left:243px;top:227px;width:10px;border-color:#555"></div>
<div class="abs tn" style="left:253.500px;top:239px;font-size:13px"><svg class="ic" width="16" height="16" viewBox="0 0 16 16"><g transform="translate(0,-1)"><path d="M2.500 2.500q0-1.500 1.500-1.500h5l3.500 3.500v8.500q0 1.500-1.500 1.500h-7q-1.500 0-1.500-1.500z" fill="#fff" stroke="#6a6a6a"/><path d="M9 1v3.500h3.500" fill="#e8e8e8" stroke="#6a6a6a" stroke-width="0.900"/><path d="M4.500 8h6" stroke="#666" stroke-width="1.200"/><path d="M4.500 10.500h6" stroke="#9a8e92" stroke-width="1.200"/></g></svg><div class="lbl" style="left:17.500px;top:2px;color:#444">网络部</div></div>
<div class="abs doth" style="left:243px;top:248px;width:10px;border-color:#555"></div>
<div class="abs dotv" style="left:242px;top:174px;height:75px;border-color:#555"></div>
<div class="abs " style="left:390px;top:99px;width:6px;height:670px;background:#edf3fc"></div>
<div class="abs " style="left:390px;top:424px;width:6px;height:20px"><svg width="6" height="20" viewBox="0 0 6 20"><path d="M4.500 7.500v5l-3-2.500z" fill="#444"/></svg></div>
<div class="abs " style="left:396px;top:99px;width:1037px;height:59px;border:1px solid #c6ccd8;background:#fff"></div>
<div class="abs tbar" style="left:397px;top:100px;width:1035px;height:28px"><div class="abs tb" style="left:5px"><svg class="ic" width="16" height="16" viewBox="0 0 16 16"><circle cx="8" cy="8" r="6.800" fill="#78c868" stroke="#55a34a" stroke-width="1"/><circle cx="8" cy="8" r="5.600" fill="none" stroke="#b4e4a8" stroke-width="0.900"/><path d="M8 4.700v6.600M4.700 8h6.600" stroke="#fff" stroke-width="2.300"/></svg><span>新增</span></div><div class="abs tb" style="left:61px"><svg class="ic" width="16" height="16" viewBox="0 0 16 16"><path d="M2.500 1.500h7l3 3v10h-10z" fill="#fafafa" stroke="#b4b4b4"/><path d="M9.500 1.500v3h3" fill="#eee" stroke="#b4b4b4" stroke-width="0.800"/><path d="M4 4.500h4M4 6.500h6M4 8.500h5M4 10.500h3" stroke="#d0d0d0"/><path d="M7 14.500l.8-3 4.200-4.500 2.500 2.200-4.300 4.500z" fill="#f0bc3c" stroke="#c08a2a" stroke-width="0.600"/><path d="M11.500 7.500l1.500-1.700q1-.8 2 .2t.3 2l-1.500 1.700z" fill="#c050c8" stroke="#9a34a4" stroke-width="0.500"/></svg><span>编辑</span></div><div class="abs tb" style="left:116px"><svg class="ic" width="16" height="16" viewBox="0 0 16 16"><circle cx="8" cy="8" r="6.800" fill="#ec6a60" stroke="#cf4a40" stroke-width="1"/><circle cx="8" cy="8" r="5.600" fill="none" stroke="#f6b0a8" stroke-width="0.900"/><path d="M4.500 8h7" stroke="#fff" stroke-width="2.500"/></svg><span>删除</span></div><div class="abs tb" style="left:172px"><svg class="ic" width="16" height="16" viewBox="0 0 16 16"><path d="M0.800 14.500c0-3.300 2-4.300 4.300-4.600h4.800c2.300.3 4.300 1.300 4.300 4.600z" fill="#5b96d4" stroke="#3d78b8" stroke-width="0.700"/><path d="M6.300 10l1.200 3.500 1.200-3.500z" fill="#fff"/><path d="M4.700 5c0-4 5.600-4 5.600 0c0 1.500-.5 5-2.800 5s-2.800-3.500-2.800-5z" fill="#eec29c" stroke="#b88858" stroke-width="0.500"/><path d="M4.200 6c-.8-5.800 7.400-5.800 6.600 0c-.5-2-1-2.800-3.300-2.800s-2.800.8-3.300 2.800z" fill="#6a4428"/><circle cx="12.300" cy="12.300" r="3.500" fill="#2eaa3a" stroke="#fff" stroke-width="0.500"/><path d="M12.300 10.300v4M10.300 12.300h4" stroke="#fff" stroke-width="1.400"/></svg><span>角色人员</span></div><div class="abs tb" style="left:251px"><svg class="ic" width="16" height="16" viewBox="0 0 16 16"><rect x="0.500" y="1.500" width="15" height="12.500" rx="1" fill="#f0f0f0" stroke="#9a9a9a"/><rect x="1" y="2" width="14" height="2.200" fill="#bcbcbc"/><path d="M2.500 6.500h1M2.500 8.500h1M2.500 10.500h1M2.500 12.500h1" stroke="#777" stroke-width="1"/><path d="M4.500 6.500h8M4.500 8.500h9M4.500 10.500h7M4.500 12.500h9" stroke="#c4c4c4" stroke-width="1"/></svg><span>模块权限</span></div><div class="abs tb" style="left:331px"><svg class="ic" width="16" height="16" viewBox="0 0 16 16"><rect x="1.500" y="1.500" width="13" height="13" fill="#f2f2f2" stroke="#a0a0a0"/><rect x="2" y="2" width="12" height="7" fill="#fafafa"/><path d="M3.500 3.500h1.500v5h-1.500z" fill="#d8d8d8"/><rect x="2" y="10" width="12" height="4" fill="#8a8a8a"/><rect x="9.500" y="10.800" width="3.500" height="2.400" fill="#f4f4f4"/><rect x="3" y="11" width="2" height="2" fill="#444"/></svg><span>按钮权限</span></div><div class="abs tb" style="left:410px"><svg class="ic" width="16" height="16" viewBox="0 0 16 16"><path d="M4 11.500l-1 2.500 2.500-.8 8-8.700-1.700-1.600z" fill="#f4c85a" stroke="#b8862a" stroke-width="0.600"/><path d="M11.800 2.900l1.700 1.600 1-1.100q.5-.8-.3-1.400t-1.400 0z" fill="#e8705c"/><path d="M3 14l.8-2 1.300 1.300z" fill="#444"/><path d="M0.500 15h15" stroke="#9ab0d0" stroke-width="1"/><path d="M1.500 15v-1.500M4.500 15v-1M7.500 15v-1.500M10.500 15v-1M13.500 15v-1.500" stroke="#9ab0d0" stroke-width="0.900"/></svg><span>字段权限</span></div><div class="abs tb" style="left:490px"><svg class="ic" width="16" height="16" viewBox="0 0 16 16"><rect x="2.500" y="2.500" width="11" height="13" rx="1" fill="#fdfdfd" stroke="#5a4a3c" stroke-width="0.900"/><rect x="3.500" y="3.500" width="9" height="11" fill="none" stroke="#c8b8a0" stroke-width="0.700"/><path d="M5.500 3.500v-1.500q0-1.500 2.500-1.500t2.500 1.500v1.500z" fill="#e4e4e4" stroke="#4a4a4a" stroke-width="0.800"/><path d="M5 6.500h6M5 8.500h6M5 10.500h6M5 12.500h6" stroke="#b4b4b4" stroke-width="0.900"/></svg><span>数据权限</span></div><div class="abs tsep" style="left:54px"></div><div class="abs tsep" style="left:110px"></div><div class="abs tsep" style="left:165px"></div><div class="abs tsep" style="left:244px"></div><div class="abs tsep" style="left:324px"></div><div class="abs tsep" style="left:404px"></div><div class="abs tsep" style="left:483px"></div><div class="abs tsep" style="left:563px"></div></div>
<div class="abs " style="left:397px;top:137px;line-height:14px;white-space:nowrap;color:#222">名称<span style="position:relative;left:2px">：</span></div>
<div class="abs inp" style="left:434px;top:132px;width:135px">请输入名称查询</div>
<div class="abs " style="left:572.500px;top:137px;line-height:14px;white-space:nowrap;color:#222">归属组织<span style="position:relative;left:2px">：</span></div>
<div class="abs inp" style="left:634px;top:132px;width:135px">请输入归属组织查询</div>
<div class="abs btn" style="left:773px;top:132px;width:40px">搜 索</div>
<div class="abs btn" style="left:817px;top:132px;width:40px">重 置</div>
<div class="abs " style="left:396px;top:158px;width:1037px;height:6px;background:#eef3fa"></div>
<div class="abs " style="left:898px;top:158px;width:34px;height:6px;background:#eef2f8;border:1px solid #d4dce8;border-bottom:0;border-radius:4px 4px 0 0"><svg class="abs" style="left:13px;top:1px" width="7" height="4" viewBox="0 0 7 4"><path d="M0 4h7l-3.500-3.500z" fill="#444"/></svg></div>
<div class="abs" style="left:396px;top:164px;width:1037px;height:605px;border:1px solid #c6ccd8;background:#fff;overflow:hidden">
<div class="abs " style="left:0;top:0;width:1035px;height:23px;background:#e8f2fc;border-bottom:1px solid #a8b8cc"></div>
<table class="grid" style="left:-1px;top:-1px;width:660px"><colgroup><col style="width:30px"><col style="width:105px"><col style="width:155px"><col style="width:55px"><col style="width:55px"><col style="width:55px"><col style="width:205px"></colgroup><tr><th></th><th>名称</th><th>归属组织</th><th>冻结</th><th>允许删除</th><th>排序</th><th>备注</th></tr><tr class=""><td class="n">1</td><td class="l">董事长</td><td class="l">总经理</td><td class="c"><span class="cb"></span></td><td class="c"><span class="cb" style="left:-1px"><svg style="position:absolute;left:-2px;top:-3px" width="16" height="13" viewBox="0 0 16 13"><path d="M1.500 6.500l4.500 4 8-9" fill="none" stroke="#757575" stroke-width="2.800"/></svg></span></td><td class="c">0</td><td></td></tr><tr class="alt"><td class="n">2</td><td class="l">总经理</td><td class="l">总经理</td><td class="c"><span class="cb"></span></td><td class="c"><span class="cb" style="left:-1px"><svg style="position:absolute;left:-2px;top:-3px" width="16" height="13" viewBox="0 0 16 13"><path d="M1.500 6.500l4.500 4 8-9" fill="none" stroke="#757575" stroke-width="2.800"/></svg></span></td><td class="c">1</td><td></td></tr><tr class=""><td class="n">3</td><td class="l">总经理助理</td><td class="l">总经理</td><td class="c"><span class="cb"></span></td><td class="c"><span class="cb" style="left:-1px"><svg style="position:absolute;left:-2px;top:-3px" width="16" height="13" viewBox="0 0 16 13"><path d="M1.500 6.500l4.500 4 8-9" fill="none" stroke="#757575" stroke-width="2.800"/></svg></span></td><td class="c">2</td><td></td></tr><tr class="alt"><td class="n">4</td><td class="l">常务副总</td><td class="l">总经理</td><td class="c"><span class="cb"></span></td><td class="c"><span class="cb" style="left:-1px"><svg style="position:absolute;left:-2px;top:-3px" width="16" height="13" viewBox="0 0 16 13"><path d="M1.500 6.500l4.500 4 8-9" fill="none" stroke="#757575" stroke-width="2.800"/></svg></span></td><td class="c">3</td><td></td></tr><tr class="hov"><td class="n">5</td><td class="l">营销总监</td><td class="l">总经理</td><td class="c"><span class="cb"></span></td><td class="c"><span class="cb" style="left:-1px"><svg style="position:absolute;left:-2px;top:-3px" width="16" height="13" viewBox="0 0 16 13"><path d="M1.500 6.500l4.500 4 8-9" fill="none" stroke="#757575" stroke-width="2.800"/></svg></span></td><td class="c">4</td><td></td></tr><tr class="sel"><td class="n">6</td><td class="l">市场经理</td><td class="l">总经理</td><td class="c"><span class="cb"></span></td><td class="c"><span class="cb" style="left:-1px"><svg style="position:absolute;left:-2px;top:-3px" width="16" height="13" viewBox="0 0 16 13"><path d="M1.500 6.500l4.500 4 8-9" fill="none" stroke="#757575" stroke-width="2.800"/></svg></span></td><td class="c">5</td><td></td></tr><tr class=""><td class="n">7</td><td class="l">市场专员</td><td class="l">总经理</td><td class="c"><span class="cb"></span></td><td class="c"><span class="cb" style="left:-1px"><svg style="position:absolute;left:-2px;top:-3px" width="16" height="13" viewBox="0 0 16 13"><path d="M1.500 6.500l4.500 4 8-9" fill="none" stroke="#757575" stroke-width="2.800"/></svg></span></td><td class="c">6</td><td></td></tr><tr class="alt"><td class="n">8</td><td class="l">客服经理</td><td class="l">总经理</td><td class="c"><span class="cb"></span></td><td class="c"><span class="cb" style="left:-1px"><svg style="position:absolute;left:-2px;top:-3px" width="16" height="13" viewBox="0 0 16 13"><path d="M1.500 6.500l4.500 4 8-9" fill="none" stroke="#757575" stroke-width="2.800"/></svg></span></td><td class="c">7</td><td></td></tr><tr class=""><td class="n">9</td><td class="l">客服专员</td><td class="l">总经理</td><td class="c"><span class="cb"></span></td><td class="c"><span class="cb" style="left:-1px"><svg style="position:absolute;left:-2px;top:-3px" width="16" height="13" viewBox="0 0 16 13"><path d="M1.500 6.500l4.500 4 8-9" fill="none" stroke="#757575" stroke-width="2.800"/></svg></span></td><td class="c">8</td><td></td></tr><tr class="alt"><td class="n">10</td><td class="l">资源总监</td><td class="l">总经理</td><td class="c"><span class="cb"></span></td><td class="c"><span class="cb" style="left:-1px"><svg style="position:absolute;left:-2px;top:-3px" width="16" height="13" viewBox="0 0 16 13"><path d="M1.500 6.500l4.500 4 8-9" fill="none" stroke="#757575" stroke-width="2.800"/></svg></span></td><td class="c">9</td><td></td></tr><tr class=""><td class="n">11</td><td class="l">人事总监</td><td class="l">总经理</td><td class="c"><span class="cb"></span></td><td class="c"><span class="cb" style="left:-1px"><svg style="position:absolute;left:-2px;top:-3px" width="16" height="13" viewBox="0 0 16 13"><path d="M1.500 6.500l4.500 4 8-9" fill="none" stroke="#757575" stroke-width="2.800"/></svg></span></td><td class="c">10</td><td></td></tr><tr class="alt"><td class="n">12</td><td class="l">人事专员</td><td class="l">总经理</td><td class="c"><span class="cb"></span></td><td class="c"><span class="cb" style="left:-1px"><svg style="position:absolute;left:-2px;top:-3px" width="16" height="13" viewBox="0 0 16 13"><path d="M1.500 6.500l4.500 4 8-9" fill="none" stroke="#757575" stroke-width="2.800"/></svg></span></td><td class="c">11</td><td></td></tr><tr class=""><td class="n">13</td><td class="l">行政专员</td><td class="l">总经理</td><td class="c"><span class="cb"></span></td><td class="c"><span class="cb" style="left:-1px"><svg style="position:absolute;left:-2px;top:-3px" width="16" height="13" viewBox="0 0 16 13"><path d="M1.500 6.500l4.500 4 8-9" fill="none" stroke="#757575" stroke-width="2.800"/></svg></span></td><td class="c">12</td><td></td></tr><tr class="alt"><td class="n">14</td><td class="l">财务总监</td><td class="l">总经理</td><td class="c"><span class="cb"></span></td><td class="c"><span class="cb" style="left:-1px"><svg style="position:absolute;left:-2px;top:-3px" width="16" height="13" viewBox="0 0 16 13"><path d="M1.500 6.500l4.500 4 8-9" fill="none" stroke="#757575" stroke-width="2.800"/></svg></span></td><td class="c">13</td><td></td></tr><tr class=""><td class="n">15</td><td class="l">会计</td><td class="l">总经理</td><td class="c"><span class="cb"></span></td><td class="c"><span class="cb" style="left:-1px"><svg style="position:absolute;left:-2px;top:-3px" width="16" height="13" viewBox="0 0 16 13"><path d="M1.500 6.500l4.500 4 8-9" fill="none" stroke="#757575" stroke-width="2.800"/></svg></span></td><td class="c">14</td><td></td></tr><tr class="alt"><td class="n">16</td><td class="l">出纳</td><td class="l">总经理</td><td class="c"><span class="cb"></span></td><td class="c"><span class="cb" style="left:-1px"><svg style="position:absolute;left:-2px;top:-3px" width="16" height="13" viewBox="0 0 16 13"><path d="M1.500 6.500l4.500 4 8-9" fill="none" stroke="#757575" stroke-width="2.800"/></svg></span></td><td class="c">15</td><td></td></tr><tr class=""><td class="n">17</td><td class="l">结算经理</td><td class="l">总经理</td><td class="c"><span class="cb"></span></td><td class="c"><span class="cb" style="left:-1px"><svg style="position:absolute;left:-2px;top:-3px" width="16" height="13" viewBox="0 0 16 13"><path d="M1.500 6.500l4.500 4 8-9" fill="none" stroke="#757575" stroke-width="2.800"/></svg></span></td><td class="c">16</td><td></td></tr><tr class="alt"><td class="n">18</td><td class="l">结算专员</td><td class="l">总经理</td><td class="c"><span class="cb"></span></td><td class="c"><span class="cb" style="left:-1px"><svg style="position:absolute;left:-2px;top:-3px" width="16" height="13" viewBox="0 0 16 13"><path d="M1.500 6.500l4.500 4 8-9" fill="none" stroke="#757575" stroke-width="2.800"/></svg></span></td><td class="c">17</td><td></td></tr><tr class=""><td class="n">19</td><td class="l">网管</td><td class="l">总经理</td><td class="c"><span class="cb"></span></td><td class="c"><span class="cb" style="left:-1px"><svg style="position:absolute;left:-2px;top:-3px" width="16" height="13" viewBox="0 0 16 13"><path d="M1.500 6.500l4.500 4 8-9" fill="none" stroke="#757575" stroke-width="2.800"/></svg></span></td><td class="c">18</td><td></td></tr><tr class="alt"><td class="n">20</td><td class="l">前台</td><td class="l">总经理</td><td class="c"><span class="cb"></span></td><td class="c"><span class="cb" style="left:-1px"><svg style="position:absolute;left:-2px;top:-3px" width="16" height="13" viewBox="0 0 16 13"><path d="M1.500 6.500l4.500 4 8-9" fill="none" stroke="#757575" stroke-width="2.800"/></svg></span></td><td class="c">19</td><td></td></tr></table>
<div class="abs" style="left:0;top:577px;width:1035px;height:27px;background:#ebf3fc;border-top:1px solid #b8c4d4">
<div class="abs " style="left:6px;top:7px"><svg width="11" height="8" viewBox="0 0 11 8"><path d="M1 1v6" stroke="#b8cbe6" stroke-width="1.500"/><path d="M9 1v6l-6-3z" fill="#b8cbe6"/></svg></div>
<div class="abs " style="left:25px;top:7px"><svg width="11" height="8" viewBox="0 0 11 8"><path d="M5 1v6l-5-3zM11 1v6l-5-3z" fill="#b8cbe6"/></svg></div>
<div class="abs tsep" style="left:44px;top:4px;height:20px;background:#dfe8f4"></div>
<div class="abs " style="left:48px;top:2px;width:27px;height:21px;border:1px solid #a9a9a9;background:#fff;line-height:20px;padding-left:2px;font-size:13px;color:#222">1</div>
<div class="abs " style="left:78px;top:6px;line-height:14px;white-space:nowrap;color:#444;word-spacing:0.6px">共 1 页</div>
<div class="abs tsep" style="left:121px;top:4px;height:20px;background:#dfe8f4"></div>
<div class="abs " style="left:129px;top:7px"><svg width="11" height="8" viewBox="0 0 11 8"><path d="M0 1v6l5-3zM6 1v6l5-3z" fill="#b8cbe6"/></svg></div>
<div class="abs " style="left:149px;top:7px"><svg width="11" height="8" viewBox="0 0 11 8"><path d="M10 1v6" stroke="#b8cbe6" stroke-width="1.500"/><path d="M2 1v6l6-3z" fill="#b8cbe6"/></svg></div>
<div class="abs " style="left:165px;top:3px;width:46px;height:19px;border:1px solid #a9a9a9;background:#fff;line-height:19px;padding-left:4px;font-size:13px;color:#222;border-radius:2px">100<svg class="abs" style="left:32px;top:5px" width="6" height="6" viewBox="0 0 6 6"><path d="M0 0h6l-3 6z" fill="#111"/></svg></div>
</div>
</div>
<div id="foot" class="abs">
<div class="abs " style="left:3px;top:0">技术支持<span style="position:relative;left:2px">：</span>信息管理处</div>
<div class="abs " style="left:130px;top:3px;width:1px;height:17px;background:#c8d4e6"></div>
<div class="abs " style="left:139px;top:0">专业版 <span style="letter-spacing:0.4px">V2.0</span></div>
<div class="abs " style="left:210px;top:3px;width:1px;height:17px;background:#c8d4e6"></div>
<div class="abs " style="left:218px;top:0">问题反馈</div>
<div class="abs " style="left:273px;top:3px;width:1px;height:17px;background:#c8d4e6"></div>
<div class="abs " style="left:605px;top:0"><span id="cp1" style="letter-spacing:0.35px">CopyRight 2006-2016. </span></div>
<div class="abs " style="left:737px;top:0">京<span id="cp2" style="letter-spacing:0.2px">ICP</span>备<span style="letter-spacing:0.15px">06046876</span>号</div>
<div class="abs " style="left:851px;top:0">|</div>
<div class="abs " style="left:858px;top:0">京公网安备<span id="cp3" style="letter-spacing:0.4px">11010702000869</span>号</div>
<div class="abs " style="left:1255px;top:0">所在部门</div>
</div>
<div class="abs" style="left:1293px;top:752px;width:147px;height:43px;background:#fff;overflow:hidden">
<svg class="abs" style="left:0;top:0" width="60" height="43" viewBox="0 0 60 43"><ellipse cx="31.500" cy="20.500" rx="18" ry="16" fill="#2b3990"/><path d="M22.500 11.500h18l-11 14h9.500l-1.500 5.500h-18.500l11-14h-9z" fill="#fff"/><path d="M12 3C3 6-1 16 6 27C14 39 38 44 57 35.500C42 39 25 36 16 26C10 19 9 11 16 7.500z" fill="#9e1a1a"/><circle cx="14.500" cy="5.500" r="3.200" fill="#9e1a1a"/></svg>
<div class="abs" id="wm1" style="left:57px;top:4px;font:900 17px/20px 'Liberation Serif','Noto Serif CJK SC',serif;color:#1c4a98;white-space:nowrap">这里教程网</div>
<div class="abs" id="wm2" style="left:65px;top:24px;font:bold 11px/14px 'Liberation Serif',serif;color:#1c4a98;white-space:nowrap;letter-spacing:0.600px">herecours.com</div>
</div>
</body></html>
